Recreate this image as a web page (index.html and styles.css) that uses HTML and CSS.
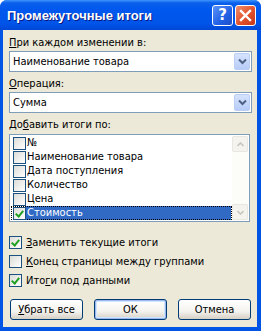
FILE: index.html
```html
<!DOCTYPE html>
<html>

<head>
  <title>Промежуточные итоги</title>
  <link rel="stylesheet" href="styles.css">
</head>

<body>
  <div class="window">
    <div class="titlebar">
      <span class="title">Промежуточные итоги</span>
      <span class="tbtn help">?</span>
      <span class="tbtn close">
        <svg width="13" height="13" viewBox="0 0 13 13"><path d="M2 2 L11 11 M11 2 L2 11" stroke="#fff" stroke-width="2.4" stroke-linecap="square"/></svg>
      </span>
    </div>
    <div class="client">
      <div class="label"><u>П</u>ри каждом изменении в:</div>
      <div class="combo">
        <span class="value">Наименование товара</span>
        <span class="drop"><svg width="9" height="7" viewBox="0 0 9 7"><path d="M1 1.5 L4.5 5 L8 1.5" fill="none" stroke="#4D6185" stroke-width="2"/></svg></span>
      </div>
      <div class="label"><u>О</u>перация:</div>
      <div class="combo">
        <span class="value">Сумма</span>
        <span class="drop"><svg width="9" height="7" viewBox="0 0 9 7"><path d="M1 1.5 L4.5 5 L8 1.5" fill="none" stroke="#4D6185" stroke-width="2"/></svg></span>
      </div>
      <div class="label">До<u>б</u>авить итоги по:</div>
      <div class="list">
        <div class="items">
          <div class="item"><span class="box"></span><span class="text">№</span></div>
          <div class="item"><span class="box"></span><span class="text">Наименование товара</span></div>
          <div class="item"><span class="box"></span><span class="text">Дата поступления</span></div>
          <div class="item"><span class="box"></span><span class="text">Количество</span></div>
          <div class="item"><span class="box"></span><span class="text">Цена</span></div>
          <div class="item focused"><span class="box checked"></span><span class="text selected">Стоимость</span></div>
        </div>
        <div class="scrollbar">
          <span class="arrow"><svg width="7" height="5" viewBox="0 0 7 5"><path d="M0.5 4 L3.5 1 L6.5 4" fill="none" stroke="#C9C7BA" stroke-width="1.6"/></svg></span>
          <span class="track"></span>
          <span class="arrow"><svg width="7" height="5" viewBox="0 0 7 5"><path d="M0.5 1 L3.5 4 L6.5 1" fill="none" stroke="#C9C7BA" stroke-width="1.6"/></svg></span>
        </div>
      </div>
      <div class="options">
        <div class="option"><span class="box checked"></span><span><u>З</u>аменить текущие итоги</span></div>
        <div class="option"><span class="box"></span><span><u>К</u>онец страницы между группами</span></div>
        <div class="option"><span class="box checked"></span><span>Ито<u>г</u>и под данными</span></div>
      </div>
      <div class="buttons">
        <span class="button"><u>У</u>брать все</span>
        <span class="button default">ОК</span>
        <span class="button">Отмена</span>
      </div>
    </div>
  </div>
</body>

</html>
```

FILE: styles.css
```css
body {
  margin: 0;
  font-family: Tahoma, "DejaVu Sans Condensed", "Liberation Sans", sans-serif;
  font-size: 11px;
  color: #000;
}

.window {
  width: 261px;
  height: 331px;
  display: flex;
  flex-direction: column;
  background: #0055E5;
  border-radius: 7px 7px 0 0;
  box-sizing: border-box;
  padding: 0 4px 4px 3px;
}

.titlebar {
  height: 30px;
  display: flex;
  align-items: center;
  margin: 0 -4px 0 -3px;
  padding: 0 5px 0 7px;
  border-radius: 7px 7px 0 0;
  background: linear-gradient(#3E95FF 0, #0A5FEA 3px, #0058EE 9px, #0054E8 24px, #0047D4 30px);
}

.title {
  flex: 1;
  color: #fff;
  font-family: "Liberation Sans", sans-serif;
  font-weight: bold;
  font-size: 13px;
  text-shadow: 1px 1px #0A1883;
}

.tbtn {
  width: 21px;
  height: 21px;
  box-sizing: border-box;
  border: 1px solid #fff;
  border-radius: 3px;
  display: flex;
  align-items: center;
  justify-content: center;
  margin-left: 2px;
}

.help {
  background: linear-gradient(135deg, #5C93F8, #2160E5 60%, #1E4FC9);
  color: #fff;
  font-family: "DejaVu Sans", sans-serif;
  font-weight: bold;
  font-size: 15px;
}

.close {
  background: linear-gradient(135deg, #F08E6E, #E2512A 55%, #C8381A);
}

.client {
  flex: 1;
  background: #ECE9D8;
  padding: 6px 6px 0 6px;
}

.label {
  height: 13px;
  line-height: 13px;
  margin-bottom: 2px;
}

.combo {
  height: 21px;
  box-sizing: border-box;
  border: 1px solid #7F9DB9;
  background: #fff;
  display: flex;
  align-items: center;
  padding: 0 1px 0 3px;
  margin-bottom: 5px;
  width: 243px;
}

.combo .value {
  flex: 1;
}

.drop {
  width: 16px;
  height: 17px;
  box-sizing: border-box;
  border: 1px solid #B9CDF5;
  border-radius: 2px;
  background: linear-gradient(#D6E3FD, #B7CCF8);
  display: flex;
  align-items: center;
  justify-content: center;
}

.list {
  margin-top: 3px;
  width: 241px;
  height: 88px;
  box-sizing: border-box;
  border: 1px solid #7F9DB9;
  background: #fff;
  display: flex;
  padding: 1px;
}

.items {
  flex: 1;
  display: flex;
  flex-direction: column;
}

.item {
  height: 14px;
  display: flex;
  align-items: center;
  padding-left: 2px;
}

.item .text {
  padding: 0 2px 0 1px;
  line-height: 14px;
}

.item.focused {
  outline: 1px dotted #000;
  outline-offset: -1px;
}

.text.selected {
  flex: 1;
  background: #316AC5;
  color: #fff;
  align-self: stretch;
  margin-right: 1px;
}

.box {
  width: 13px;
  height: 13px;
  box-sizing: border-box;
  border: 1px solid #1C5180;
  background: linear-gradient(135deg, #DCDCD7, #fff);
  flex: none;
  position: relative;
}

.box.checked::after {
  content: "";
  position: absolute;
  left: 3px;
  top: 1px;
  width: 3px;
  height: 6px;
  border: solid #21A121;
  border-width: 0 2px 2px 0;
  transform: rotate(40deg);
}

.scrollbar {
  width: 16px;
  display: flex;
  flex-direction: column;
  background: #FCFCF8;
}

.arrow {
  height: 16px;
  box-sizing: border-box;
  border: 1px solid #E8E7E0;
  border-radius: 2px;
  background: #F4F3EE;
  display: flex;
  align-items: center;
  justify-content: center;
}

.track {
  flex: 1;
}

.options {
  margin-top: 14px;
  display: flex;
  flex-direction: column;
  gap: 6px;
}

.option {
  height: 13px;
  display: flex;
  align-items: center;
  gap: 4px;
}

.buttons {
  margin-top: 12px;
  display: flex;
  gap: 11px;
  padding-left: 1px;
}

.button {
  width: 73px;
  height: 21px;
  box-sizing: border-box;
  border: 1px solid #003C74;
  border-radius: 3px;
  background: linear-gradient(#FFFFFF, #F4F3EE 60%, #D6D0C5);
  display: flex;
  align-items: center;
  justify-content: center;
}

.button.default {
  box-shadow: inset 0 0 0 1px #9DB7EE, inset 0 0 0 2px #CEE7FF;
}
```
